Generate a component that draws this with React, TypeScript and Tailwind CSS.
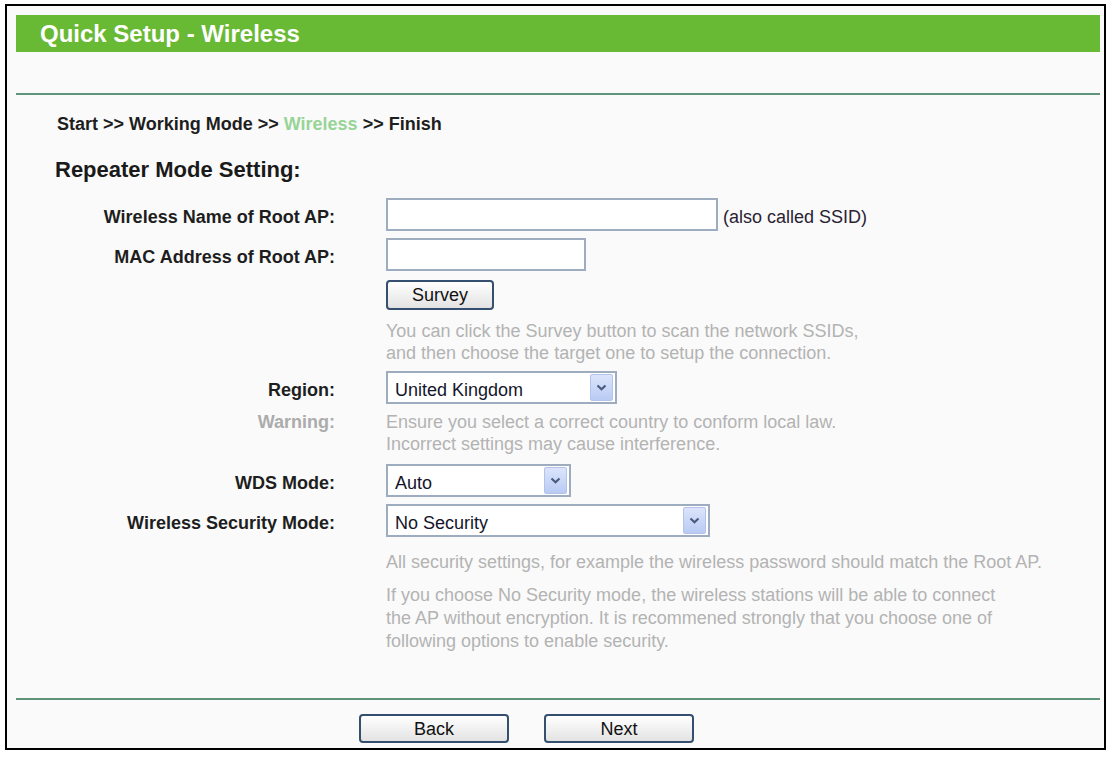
import React from 'react';

const Chevron = () => (
    <svg width="11" height="7" viewBox="0 0 11 7">
        <polyline points="1.5,1.5 5.5,5.2 9.5,1.5" fill="none" stroke="#4a5b82" strokeWidth="2.2" />
    </svg>
);

const Select: React.FC<{ value: string; className: string }> = ({ value, className }) => (
    <div className={`h-[33px] border-2 border-[#9eacbf] bg-white flex justify-between ${className}`}>
        <span className="pl-[7px] pt-[6px] text-[18px] leading-[22px] text-[#15152a]">{value}</span>
        <span className="w-[23px] h-[27px] mt-[1px] mr-[2px] rounded-[2px] border border-[#b4c3ea] bg-gradient-to-b from-[#dbe4fb] to-[#b9cbf4] flex items-center justify-center">
            <Chevron />
        </span>
    </div>
);

const Button: React.FC<{ label: string; className: string }> = ({ label, className }) => (
    <button className={`border-2 border-[#35506e] rounded-[4px] bg-gradient-to-b from-[#ffffff] to-[#e3e3e3] text-[18px] leading-[22px] text-[#111] flex items-center justify-center ${className}`}>
        {label}
    </button>
);

const Row: React.FC<{ label?: string; muted?: boolean; flat?: boolean; className?: string; children: React.ReactNode }> = ({ label, muted, flat, className, children }) => (
    <div className={`flex ${className ?? ''}`}>
        <div className={`w-[328px] shrink-0 text-right font-bold text-[18px] leading-[22px] ${flat ? '' : 'pt-[8px]'} ${muted ? 'text-[#acacac]' : 'text-[#1e1e1e]'}`}>
            {label}
        </div>
        <div className="ml-[51px]">{children}</div>
    </div>
);

const Help: React.FC<{ children: React.ReactNode; className?: string }> = ({ children, className }) => (
    <div className={`text-[18px] text-[#b3b3b3] ${className ?? ''}`}>{children}</div>
);

export default function App() {
    return (
        <div className="w-[1112px] h-[757px] bg-white pl-[5px] pt-[4px] font-['Liberation_Sans',Arial,sans-serif]">
            <div className="w-[1101px] h-[746px] border-2 border-black bg-[#fafafa] pt-[9px]">
                <div className="ml-[9px] w-[1084px] h-[37px] bg-[#68b934] pl-[24px] text-[24px] leading-[37px] font-bold text-white">
                    Quick Setup - Wireless
                </div>
                <div className="ml-[9px] w-[1084px] h-[2px] mt-[41px] bg-[#5e957a]"></div>

                <div className="ml-[50px] mt-[18px] text-[18px] leading-[22px] font-bold text-[#1e1e1e]">
                    Start &gt;&gt; Working Mode &gt;&gt; <span className="text-[#97d497]">Wireless</span> &gt;&gt; Finish
                </div>

                <div className="ml-[48px] mt-[22px] text-[22px] leading-[26px] font-bold text-[#1a1a1a]">
                    Repeater Mode Setting:
                </div>

                <Row label="Wireless Name of Root AP:" className="mt-[15px]">
                    <div className="flex">
                        <div className="w-[332px] h-[33px] border-2 border-[#9eacbf] bg-white"></div>
                        <span className="ml-[5px] pt-[8px] text-[18px] leading-[22px] text-[#2a2233]">(also called SSID)</span>
                    </div>
                </Row>

                <Row label="MAC Address of Root AP:" className="mt-[7px]">
                    <div className="w-[200px] h-[33px] border-2 border-[#9eacbf] bg-white"></div>
                </Row>

                <Row className="mt-[9px]">
                    <Button label="Survey" className="w-[108px] h-[30px]" />
                </Row>

                <Row className="mt-[10px]" flat>
                    <Help className="leading-[22px]">
                        You can click the Survey button to scan the network SSIDs,<br />
                        and then choose the target one to setup the connection.
                    </Help>
                </Row>

                <Row label="Region:" className="mt-[7px]">
                    <Select value="United Kingdom" className="w-[231px]" />
                </Row>

                <Row label="Warning:" muted flat className="mt-[7px]">
                    <Help className="leading-[22px]">
                        Ensure you select a correct country to conform local law.<br />
                        Incorrect settings may cause interference.
                    </Help>
                </Row>

                <Row label="WDS Mode:" className="mt-[9px]">
                    <Select value="Auto" className="w-[185px]" />
                </Row>

                <Row label="Wireless Security Mode:" className="mt-[7px]">
                    <Select value="No Security" className="w-[324px]" />
                </Row>

                <Row className="mt-[14px]" flat>
                    <Help className="leading-[22px]">
                        All security settings, for example the wireless password should match the Root AP.
                    </Help>
                </Row>

                <Row className="mt-[11px]" flat>
                    <Help className="leading-[23px]">
                        If you choose No Security mode, the wireless stations will be able to connect<br />
                        the AP without encryption. It is recommened strongly that you choose one of<br />
                        following options to enable security.
                    </Help>
                </Row>

                <div className="ml-[9px] w-[1084px] h-[2px] mt-[45px] bg-[#5e957a]"></div>

                <div className="flex ml-[352px] mt-[14px] gap-[35px]">
                    <Button label="Back" className="w-[150px] h-[29px]" />
                    <Button label="Next" className="w-[150px] h-[29px]" />
                </div>
            </div>
        </div>
    );
}
